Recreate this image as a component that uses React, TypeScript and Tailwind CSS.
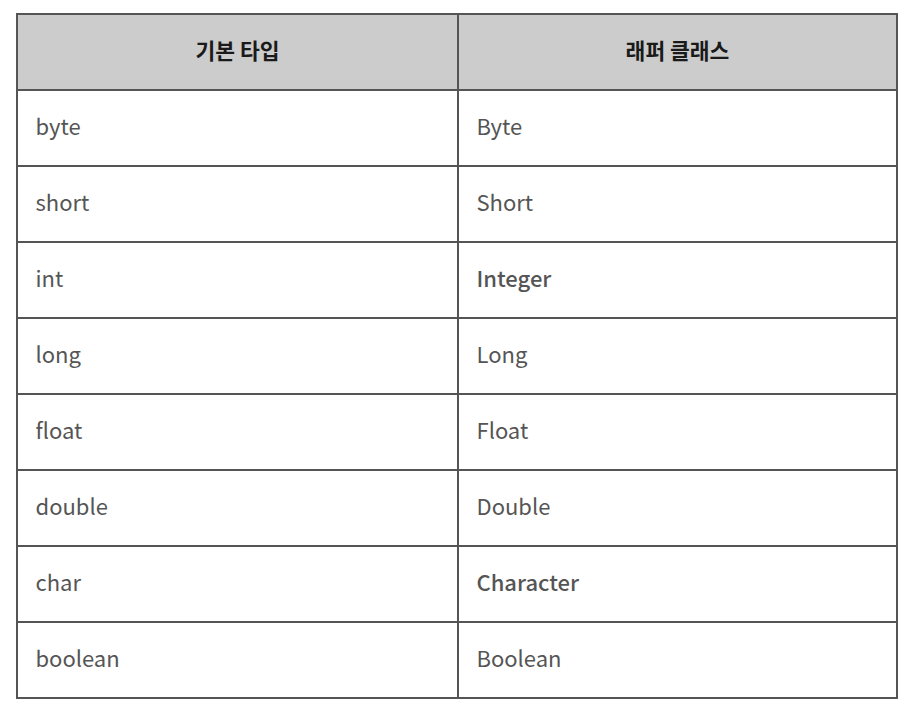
import React from "react";

const rows: [string, string, boolean?][] = [
  ["byte", "Byte"],
  ["short", "Short"],
  ["int", "Integer", true],
  ["long", "Long"],
  ["float", "Float"],
  ["double", "Double"],
  ["char", "Character", true],
  ["boolean", "Boolean"],
];

export default function App() {
  return (
    <div
      className="w-[922px] h-[720px] bg-white pl-4 pt-[13px]"
      style={{ fontFamily: '"Noto Sans CJK KR", "Noto Sans", sans-serif' }}
    >
      <div className="grid grid-cols-[441px_439px] w-[882px] border-t-2 border-l-2 border-[#555555]">
        <div className="h-[76px] pb-[4px] border-r-2 border-b-2 border-[#555555] bg-[#cccccc] flex items-center justify-center text-[21.5px] font-bold text-[#1a1a1a]">
          기본 타입
        </div>
        <div className="h-[76px] pb-[4px] border-r-2 border-b-2 border-[#555555] bg-[#cccccc] flex items-center justify-center text-[21.5px] font-bold text-[#1a1a1a]">
          래퍼 클래스
        </div>
        {rows.map(([a, b, bold]) => (
          <React.Fragment key={a}>
            <div className="h-[76px] pb-[6px] border-r-2 border-b-2 border-[#555555] flex items-center pl-[17.5px] text-[22px] text-[#555555]">
              {a}
            </div>
            <div
              className={`h-[76px] pb-[6px] border-r-2 border-b-2 border-[#555555] flex items-center pl-[17.5px] text-[22px] text-[#555555] ${
                bold ? "font-medium" : ""
              }`}
            >
              {b}
            </div>
          </React.Fragment>
        ))}
      </div>
    </div>
  );
}
